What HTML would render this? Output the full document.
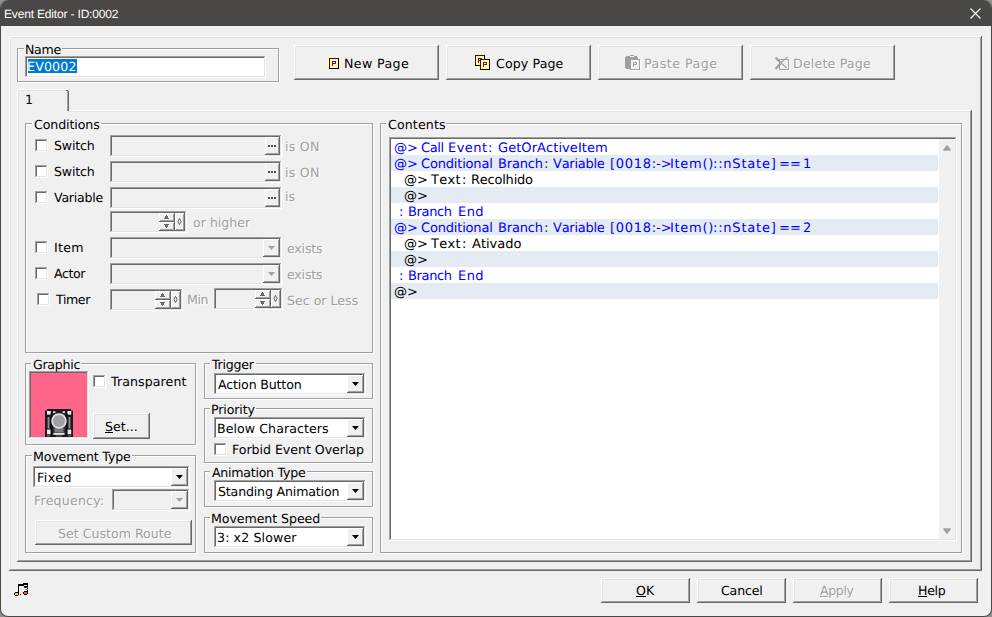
<!DOCTYPE html>
<html><head><meta charset="utf-8"><title>Event Editor - ID:0002</title>
<style>
html,body{margin:0;padding:0;}
body{width:992px;height:617px;overflow:hidden;background:#8f8f8f;position:relative;font:13px/16px "DejaVu Sans","Liberation Sans",sans-serif;}
#win{position:absolute;left:0;top:0;width:992px;height:617px;box-sizing:border-box;background:#f0f0f0;border:1px solid #4a4846;border-top:none;border-radius:8px;overflow:hidden;}
#win *{position:absolute;box-sizing:border-box;}
#tb{left:-1px;top:0;width:992px;height:26px;background:#4a4846;}
.t{white-space:pre;text-rendering:geometricPrecision;font:12.6px/16px "DejaVu Sans","Liberation Sans",sans-serif;height:16px;}
.t u{position:static !important;text-decoration:underline;text-underline-offset:1px;}
.tt{font:12px/16px "Liberation Sans",sans-serif;}
.lc{background:#f0f0f0;}
.lr{left:0;top:0;width:0;height:0;}
.ds{text-shadow:1px 1px 0 #fff;}
.li{font-size:13px;font-kerning:none;}
.gb{border:1px solid #a0a0a0;box-shadow:inset 1px 1px 0 #fff,1px 1px 0 #fff;}
.btn{background:#f0f0f0;box-shadow:inset -1px -1px 0 #696969,inset 1px 1px 0 #fff,inset -2px -2px 0 #a0a0a0,inset 2px 2px 0 #e3e3e3;}
.sk{background:#f0f0f0;box-shadow:inset -1px -1px 0 #fff,inset 1px 1px 0 #a0a0a0,inset -2px -2px 0 #e3e3e3,inset 2px 2px 0 #696969;}
.w{background:#fff;}
.cb{width:13px;height:13px;background:#fff;box-shadow:inset -1px -1px 0 #fff,inset 1px 1px 0 #a0a0a0,inset -2px -2px 0 #e3e3e3,inset 2px 2px 0 #696969;}
.ib{background:#f0f0f0;box-shadow:inset -1px -1px 0 #696969,inset 1px 1px 0 #fff,inset -2px -2px 0 #a0a0a0;}
.row{left:391px;width:547px;height:16px;background:#e4ebf3;}
svg{overflow:visible;}
</style></head><body>
<div id="win">
<div id="x0" style="left:-1px;top:0;width:992px;height:617px;">
<div id="tb"></div>
<svg style="left:970px;top:8px" width="11" height="11" viewBox="0 0 11 11"><path d="M0.5 0.5L10.5 10.5M10.5 0.5L0.5 10.5" stroke="#fff" stroke-width="1.1" fill="none"/></svg>

<!-- outer raised frame -->
<div style="left:9px;top:36px;width:973px;height:535px;box-shadow:inset -1px -1px 0 #696969,inset 1px 1px 0 #fff,inset -2px -2px 0 #a0a0a0,inset 2px 2px 0 #e3e3e3;"></div>

<!-- name group -->
<div class="gb" style="left:17px;top:48px;width:262px;height:34px;"></div>
<div class="sk w" style="left:25px;top:56px;width:241px;height:22px;"></div>
<div style="left:28px;top:59px;width:49px;height:14px;background:#0078d7;"></div>

<!-- top buttons -->
<div class="btn" style="left:294px;top:45px;width:145px;height:35px;"></div>
<div class="btn" style="left:446px;top:45px;width:145px;height:35px;"></div>
<div class="btn" style="left:598px;top:45px;width:145px;height:35px;"></div>
<div class="btn" style="left:750px;top:45px;width:145px;height:35px;"></div>
<svg style="left:0;top:0" width="992" height="100" viewBox="0 0 992 100" shape-rendering="crispEdges"><rect x="329" y="58" width="10" height="11" fill="#000"/><rect x="329" y="58" width="9" height="10" fill="#4a0a14"/><rect x="330" y="59" width="8" height="9" fill="#ffff99"/><rect x="332" y="61" width="1" height="5" fill="#800080"/><rect x="333" y="61" width="3" height="1" fill="#800080"/><rect x="335" y="62" width="1" height="1" fill="#800080"/><rect x="333" y="63" width="3" height="1" fill="#800080"/><rect x="326" y="56" width="1" height="1" fill="#ffff80"/><rect x="327" y="57" width="1" height="1" fill="#ffff80"/><rect x="328" y="58" width="1" height="1" fill="#ffff80"/><rect x="331" y="56" width="1" height="1" fill="#ffff80"/><rect x="331" y="57" width="1" height="1" fill="#ffff80"/><rect x="325" y="62" width="1" height="1" fill="#ffff80"/><rect x="326" y="62" width="1" height="1" fill="#ffff80"/><rect x="327" y="62" width="1" height="1" fill="#ffff80"/><rect x="328" y="62" width="1" height="1" fill="#ffff80"/><rect x="325" y="67" width="1" height="1" fill="#ffff80"/><rect x="326" y="66" width="1" height="1" fill="#ffff80"/><rect x="327" y="65" width="1" height="1" fill="#ffff80"/><rect x="328" y="64" width="1" height="1" fill="#ffff80"/><rect x="475" y="55" width="10" height="11" fill="#000"/><rect x="475" y="55" width="9" height="10" fill="#4a0a14"/><rect x="476" y="56" width="8" height="9" fill="#ffff99"/><rect x="478" y="58" width="1" height="5" fill="#800080"/><rect x="479" y="58" width="3" height="1" fill="#800080"/><rect x="481" y="59" width="1" height="1" fill="#800080"/><rect x="479" y="60" width="3" height="1" fill="#800080"/><rect x="480" y="59" width="10" height="11" fill="#000"/><rect x="480" y="59" width="9" height="10" fill="#4a0a14"/><rect x="481" y="60" width="8" height="9" fill="#ffff99"/><rect x="483" y="62" width="1" height="5" fill="#800080"/><rect x="484" y="62" width="3" height="1" fill="#800080"/><rect x="486" y="63" width="1" height="1" fill="#800080"/><rect x="484" y="64" width="3" height="1" fill="#800080"/><rect x="626" y="57" width="13" height="12" fill="#fff"/><rect x="625" y="57" width="13" height="11" fill="#a0a0a0"/><rect x="626" y="56" width="11" height="13" fill="#a0a0a0"/><rect x="630" y="55" width="4" height="1" fill="#a0a0a0"/><rect x="630" y="56" width="4" height="1" fill="#f4f4f4"/><rect x="631" y="60" width="10" height="11" fill="#fff"/><rect x="630" y="59" width="10" height="11" fill="#a0a0a0"/><rect x="631" y="60" width="8" height="9" fill="#f4f4f4"/><rect x="633" y="62" width="1" height="5" fill="#a0a0a0"/><rect x="634" y="62" width="3" height="1" fill="#a0a0a0"/><rect x="636" y="63" width="1" height="1" fill="#a0a0a0"/><rect x="634" y="64" width="3" height="1" fill="#a0a0a0"/><rect x="780" y="60" width="10" height="11" fill="#fff"/><rect x="779" y="59" width="10" height="11" fill="#a0a0a0"/><rect x="780" y="60" width="8" height="9" fill="#f4f4f4"/></svg>
<svg style="left:774px;top:56px" width="16" height="15" viewBox="0 0 16 15"><path d="M1.5 1.5L6.5 6.5M1.5 13L6.5 7.5" stroke="#a0a0a0" stroke-width="2.2" fill="none"/><path d="M6.5 6.5L12.5 12M6.5 7L13.5 0.8" stroke="#a0a0a0" stroke-width="1.1" fill="none"/></svg>
<svg style="left:0;top:570px" width="60" height="40" viewBox="0 570 60 40" shape-rendering="crispEdges"><rect x="23" y="583" width="5" height="2" fill="#000"/><rect x="18" y="584" width="6" height="2" fill="#000"/><rect x="18" y="584" width="1" height="9" fill="#000"/><rect x="27" y="583" width="1" height="10" fill="#000"/><rect x="24" y="586" width="4" height="1" fill="#000"/><rect x="24" y="587" width="4" height="1" fill="#3a3a3a"/><rect x="25" y="589" width="3" height="1" fill="#8a8a8a"/><rect x="14" y="593" width="5" height="2" fill="#000"/><rect x="15" y="592" width="3" height="4" fill="#000"/><rect x="15" y="593" width="3" height="2" fill="#ffe000"/><rect x="23" y="592" width="5" height="2" fill="#000"/><rect x="24" y="591" width="3" height="4" fill="#000"/><rect x="24" y="592" width="3" height="2" fill="#ff5020"/><rect x="20" y="594" width="1" height="1" fill="#000"/></svg>

<!-- tab page -->
<div style="left:17px;top:110px;width:955px;height:452px;box-shadow:inset -1px -1px 0 #696969,inset 1px 1px 0 #fff,inset -2px -2px 0 #a0a0a0,inset 2px 2px 0 #e3e3e3;"></div>
<!-- tab -->
<div style="left:17px;top:89px;width:52px;height:23px;background:#f0f0f0;"></div>
<div style="left:17px;top:91px;width:1px;height:21px;background:#fff;"></div>
<div style="left:18px;top:90px;width:1px;height:1px;background:#fff;"></div>
<div style="left:19px;top:89px;width:47px;height:1px;background:#fff;"></div>
<div style="left:18px;top:91px;width:1px;height:21px;background:#e3e3e3;"></div>
<div style="left:19px;top:90px;width:47px;height:1px;background:#e3e3e3;"></div>
<div style="left:67px;top:91px;width:1px;height:20px;background:#a0a0a0;"></div>
<div style="left:68px;top:91px;width:1px;height:20px;background:#696969;"></div>
<div style="left:66px;top:90px;width:2px;height:1px;background:#696969;"></div>

<!-- Conditions -->
<div class="gb" style="left:25px;top:123px;width:348px;height:230px;"></div>
<div class="cb" style="left:35px;top:139px"></div>
<div class="cb" style="left:35px;top:165px"></div>
<div class="cb" style="left:35px;top:191px"></div>
<div class="cb" style="left:35px;top:241px"></div>
<div class="cb" style="left:35px;top:267px"></div>
<div class="cb" style="left:37px;top:293px"></div>
<div class="sk" style="left:110px;top:135px;width:172px;height:22px;"></div>
<div class="ib" style="left:265px;top:137px;width:15px;height:18px;"></div>
<div style="left:268px;top:145px;width:2px;height:2px;background:#4d4d4d;"></div>
<div style="left:271px;top:145px;width:2px;height:2px;background:#4d4d4d;"></div>
<div style="left:274px;top:145px;width:2px;height:2px;background:#4d4d4d;"></div>
<div class="sk" style="left:110px;top:161px;width:172px;height:22px;"></div>
<div class="ib" style="left:265px;top:163px;width:15px;height:18px;"></div>
<div style="left:268px;top:171px;width:2px;height:2px;background:#4d4d4d;"></div>
<div style="left:271px;top:171px;width:2px;height:2px;background:#4d4d4d;"></div>
<div style="left:274px;top:171px;width:2px;height:2px;background:#4d4d4d;"></div>
<div class="sk" style="left:110px;top:187px;width:172px;height:22px;"></div>
<div class="ib" style="left:265px;top:189px;width:15px;height:18px;"></div>
<div style="left:268px;top:197px;width:2px;height:2px;background:#4d4d4d;"></div>
<div style="left:271px;top:197px;width:2px;height:2px;background:#4d4d4d;"></div>
<div style="left:274px;top:197px;width:2px;height:2px;background:#4d4d4d;"></div>
<div class="sk" style="left:110px;top:237px;width:172px;height:22px;"></div>
<div class="ib" style="left:263px;top:239px;width:17px;height:18px;"></div>
<svg style="left:268px;top:246px" width="7" height="4" viewBox="0 0 7 4"><path d="M0 0H7L3.5 4Z" fill="#a0a0a0"/></svg>
<div class="sk" style="left:110px;top:263px;width:172px;height:22px;"></div>
<div class="ib" style="left:263px;top:265px;width:17px;height:18px;"></div>
<svg style="left:268px;top:272px" width="7" height="4" viewBox="0 0 7 4"><path d="M0 0H7L3.5 4Z" fill="#a0a0a0"/></svg>
<div class="sk" style="left:110px;top:211px;width:77px;height:22px;"></div>
<div class="ib" style="left:175px;top:213px;width:10px;height:18px;"></div>
<svg style="left:177px;top:218px" width="5" height="7" viewBox="0 0 5 7"><path d="M2.5 0.4L4.1 3.5L2.5 6.6L0.9 3.5Z" fill="none" stroke="#5a5a5a" stroke-width="0.95"/></svg>
<div class="ib" style="left:159px;top:213px;width:16px;height:9px;"></div>
<div class="ib" style="left:159px;top:222px;width:16px;height:9px;"></div>
<svg style="left:164px;top:215px" width="5" height="4" viewBox="0 0 5 4"><path d="M2 0H3V1H4V3H5V4H0V3H1V1H2Z" fill="#696969"/></svg>
<svg style="left:164px;top:224px" width="5" height="4" viewBox="0 0 5 4"><path d="M0 0H5V1H4V3H3V4H2V3H1V1H0Z" fill="#696969"/></svg>
<div class="sk" style="left:110px;top:289px;width:73px;height:22px;"></div>
<div class="ib" style="left:171px;top:291px;width:10px;height:18px;"></div>
<svg style="left:173px;top:296px" width="5" height="7" viewBox="0 0 5 7"><path d="M2.5 0.4L4.1 3.5L2.5 6.6L0.9 3.5Z" fill="none" stroke="#5a5a5a" stroke-width="0.95"/></svg>
<div class="ib" style="left:155px;top:291px;width:16px;height:9px;"></div>
<div class="ib" style="left:155px;top:300px;width:16px;height:9px;"></div>
<svg style="left:160px;top:293px" width="5" height="4" viewBox="0 0 5 4"><path d="M2 0H3V1H4V3H5V4H0V3H1V1H2Z" fill="#696969"/></svg>
<svg style="left:160px;top:302px" width="5" height="4" viewBox="0 0 5 4"><path d="M0 0H5V1H4V3H3V4H2V3H1V1H0Z" fill="#696969"/></svg>
<div class="sk" style="left:214px;top:288px;width:69px;height:22px;"></div>
<div class="ib" style="left:271px;top:290px;width:10px;height:18px;"></div>
<svg style="left:273px;top:295px" width="5" height="7" viewBox="0 0 5 7"><path d="M2.5 0.4L4.1 3.5L2.5 6.6L0.9 3.5Z" fill="none" stroke="#5a5a5a" stroke-width="0.95"/></svg>
<div class="ib" style="left:255px;top:290px;width:16px;height:9px;"></div>
<div class="ib" style="left:255px;top:299px;width:16px;height:9px;"></div>
<svg style="left:260px;top:292px" width="5" height="4" viewBox="0 0 5 4"><path d="M2 0H3V1H4V3H5V4H0V3H1V1H2Z" fill="#696969"/></svg>
<svg style="left:260px;top:301px" width="5" height="4" viewBox="0 0 5 4"><path d="M0 0H5V1H4V3H3V4H2V3H1V1H0Z" fill="#696969"/></svg>

<!-- Graphic -->
<div class="gb" style="left:25px;top:363px;width:171px;height:82px;"></div>
<div class="sk" style="left:29px;top:371px;width:60px;height:68px;background:#ff6489;"></div>
<svg style="left:45px;top:409px" width="28" height="28" viewBox="0 0 28 28"><path d="M2 0H26V1.5H28V28H0V1.5H2Z" fill="#1b1b1d"/><rect x="7.5" y="4" width="13" height="22" fill="#333337"/><rect x="2" y="2" width="3.8" height="3.6" fill="#ececee"/><rect x="22.4" y="2" width="3.8" height="3.6" fill="#ececee"/><rect x="2" y="20.6" width="3.8" height="4.6" fill="#ececee"/><rect x="22.4" y="20.6" width="3.8" height="4.6" fill="#ececee"/><rect x="8" y="2.2" width="2.4" height="1.8" fill="#d0d0d4"/><rect x="17.6" y="2.2" width="2.4" height="1.8" fill="#d0d0d4"/><rect x="2.6" y="8" width="1.9" height="11.5" fill="#8d8d91"/><rect x="23.5" y="8" width="1.9" height="11.5" fill="#8d8d91"/><rect x="5.7" y="4" width="1.6" height="22" fill="#0c0c0e"/><rect x="20.7" y="4" width="1.6" height="22" fill="#0c0c0e"/><rect x="9.5" y="19" width="9" height="4.6" fill="#7b7b7f"/><rect x="8.5" y="24" width="11" height="1.8" fill="#ececee"/><circle cx="14" cy="12" r="7.8" fill="#dcdce0"/><circle cx="14" cy="12" r="6" fill="#a29fa3"/><rect x="2" y="26.2" width="3" height="1.3" fill="#6a6a6e"/><rect x="23" y="26.2" width="3" height="1.3" fill="#6a6a6e"/><rect x="11" y="26.4" width="6" height="1.1" fill="#6a6a6e"/></svg>
<div class="cb" style="left:93px;top:375px"></div>
<div class="btn" style="left:93px;top:413px;width:57px;height:26px;"></div>

<!-- Movement type -->
<div class="gb" style="left:25px;top:455px;width:171px;height:98px;"></div>
<div class="btn" style="left:35px;top:520px;width:157px;height:25px;"></div>

<!-- Trigger etc -->
<div class="gb" style="left:204px;top:363px;width:169px;height:36px;"></div>
<div class="gb" style="left:204px;top:408px;width:169px;height:55px;"></div>
<div class="cb" style="left:214px;top:443px"></div>
<div class="gb" style="left:204px;top:471px;width:169px;height:36px;"></div>
<div class="gb" style="left:204px;top:517px;width:169px;height:36px;"></div>
<div class="sk w" style="left:214px;top:373px;width:152px;height:22px;"></div>
<div class="ib" style="left:347px;top:375px;width:17px;height:18px;"></div>
<svg style="left:352px;top:382px" width="7" height="4" viewBox="0 0 7 4"><path d="M0 0H7L3.5 4Z" fill="#000"/></svg>
<div class="sk w" style="left:214px;top:417px;width:152px;height:22px;"></div>
<div class="ib" style="left:347px;top:419px;width:17px;height:18px;"></div>
<svg style="left:352px;top:426px" width="7" height="4" viewBox="0 0 7 4"><path d="M0 0H7L3.5 4Z" fill="#000"/></svg>
<div class="sk w" style="left:214px;top:480px;width:152px;height:22px;"></div>
<div class="ib" style="left:347px;top:482px;width:17px;height:18px;"></div>
<svg style="left:352px;top:489px" width="7" height="4" viewBox="0 0 7 4"><path d="M0 0H7L3.5 4Z" fill="#000"/></svg>
<div class="sk w" style="left:214px;top:526px;width:152px;height:22px;"></div>
<div class="ib" style="left:347px;top:528px;width:17px;height:18px;"></div>
<svg style="left:352px;top:535px" width="7" height="4" viewBox="0 0 7 4"><path d="M0 0H7L3.5 4Z" fill="#000"/></svg>
<div class="sk w" style="left:33px;top:466px;width:157px;height:22px;"></div>
<div class="ib" style="left:171px;top:468px;width:17px;height:18px;"></div>
<svg style="left:176px;top:475px" width="7" height="4" viewBox="0 0 7 4"><path d="M0 0H7L3.5 4Z" fill="#000"/></svg>
<div class="sk" style="left:112px;top:489px;width:78px;height:22px;"></div>
<div class="ib" style="left:171px;top:491px;width:17px;height:18px;"></div>
<svg style="left:176px;top:498px" width="7" height="4" viewBox="0 0 7 4"><path d="M0 0H7L3.5 4Z" fill="#a0a0a0"/></svg>

<!-- Contents -->
<div class="gb" style="left:380px;top:123px;width:582px;height:430px;"></div>
<div class="sk w" style="left:389px;top:137px;width:568px;height:404px;"></div>
<div style="left:939px;top:139px;width:16px;height:400px;background:#f0f0f0;"></div>
<div class="row" style="top:155px"></div>
<div class="row" style="top:187px"></div>
<div class="row" style="top:219px"></div>
<div class="row" style="top:251px"></div>
<div class="row" style="top:283px"></div>
<svg style="left:943px;top:145px" width="8" height="6" viewBox="0 0 8 6"><path d="M1 5L4 1L7 5Z" fill="#a0a0a0" stroke="#a0a0a0" stroke-width="1.7" stroke-linejoin="round"/></svg>
<svg style="left:943px;top:528px" width="8" height="6" viewBox="0 0 8 6"><path d="M1 1L4 5L7 1Z" fill="#a0a0a0" stroke="#a0a0a0" stroke-width="1.7" stroke-linejoin="round"/></svg>

<!-- bottom buttons -->
<div class="btn" style="left:601px;top:578px;width:89px;height:25px;"></div>
<div class="btn" style="left:697px;top:578px;width:89px;height:25px;"></div>
<div class="btn" style="left:793px;top:578px;width:89px;height:25px;"></div>
<div class="btn" style="left:889px;top:578px;width:89px;height:25px;"></div>

<span class="t tt" style="left:4.00px;top:6.00px;color:#fff;letter-spacing:-0.171px;">Event Editor - ID:0002</span>
<div class="lc" style="left:24px;top:47px;width:38px;height:4px;"></div><span class="t" style="left:25.00px;top:42.00px;color:#000;letter-spacing:-0.300px;">Name</span>
<span class="t" style="left:27.00px;top:59.00px;color:#fff;letter-spacing:0.180px;">EV0002</span>
<span class="t" style="left:25.00px;top:92.00px;color:#000;letter-spacing:0.000px;">1</span>
<div class="lc" style="left:32px;top:122px;width:69px;height:4px;"></div><span class="t" style="left:34.00px;top:117.00px;color:#000;letter-spacing:-0.100px;">Conditions</span>
<span class="t" style="left:54.00px;top:138.00px;color:#000;letter-spacing:-0.180px;">Switch</span>
<span class="t" style="left:54.00px;top:164.00px;color:#000;letter-spacing:-0.180px;">Switch</span>
<span class="t" style="left:54.00px;top:190.00px;color:#000;letter-spacing:-0.257px;">Variable</span>
<span class="t" style="left:54.00px;top:240.00px;color:#000;letter-spacing:0.300px;">Item</span>
<span class="t" style="left:54.00px;top:266.00px;color:#000;letter-spacing:-0.400px;">Actor</span>
<span class="t" style="left:56.00px;top:292.00px;color:#000;letter-spacing:-0.400px;">Timer</span>
<span class="t ds" style="left:285.00px;top:139.00px;color:#a0a0a0;letter-spacing:0.225px;">is ON</span>
<span class="t ds" style="left:285.00px;top:165.00px;color:#a0a0a0;letter-spacing:0.225px;">is ON</span>
<span class="t ds" style="left:285.00px;top:189.00px;color:#a0a0a0;letter-spacing:0.000px;">is</span>
<span class="t ds" style="left:193.00px;top:215.00px;color:#a0a0a0;letter-spacing:-0.000px;">or higher</span>
<span class="t ds" style="left:287.00px;top:241.00px;color:#a0a0a0;letter-spacing:-0.180px;">exists</span>
<span class="t ds" style="left:287.00px;top:267.00px;color:#a0a0a0;letter-spacing:-0.180px;">exists</span>
<span class="t ds" style="left:187.00px;top:292.00px;color:#a0a0a0;letter-spacing:-0.400px;">Min</span>
<span class="t ds" style="left:287.00px;top:293.00px;color:#a0a0a0;letter-spacing:0.000px;">Sec or Less</span>
<div class="lc" style="left:31px;top:362px;width:50px;height:4px;"></div><span class="t" style="left:33.00px;top:357.00px;color:#000;letter-spacing:-0.288px;">Graphic</span>
<span class="t" style="left:111.00px;top:374.00px;color:#000;letter-spacing:0.090px;">Transparent</span>
<span class="t" style="left:105.00px;top:419.00px;color:#000;letter-spacing:0.000px;"><u>S</u>et...</span>
<div class="lc" style="left:32px;top:454px;width:100px;height:4px;"></div><span class="t" style="left:33.00px;top:449.00px;color:#000;letter-spacing:-0.150px;">Movement Type</span>
<span class="t" style="left:37.00px;top:470.00px;color:#000;letter-spacing:0.450px;">Fixed</span>
<span class="t ds" style="left:34.00px;top:493.00px;color:#a0a0a0;letter-spacing:0.200px;">Frequency:</span>
<span class="t ds" style="left:58.00px;top:526.00px;color:#a0a0a0;letter-spacing:-0.000px;">Set Custom Route</span>
<div class="lc" style="left:210px;top:362px;width:46px;height:4px;"></div><span class="t" style="left:212.00px;top:357.00px;color:#000;letter-spacing:-0.240px;">Trigger</span>
<span class="t" style="left:218.00px;top:377.00px;color:#000;letter-spacing:-0.165px;">Action Button</span>
<div class="lc" style="left:210px;top:407px;width:46px;height:4px;"></div><span class="t" style="left:211.00px;top:402.00px;color:#000;letter-spacing:-0.129px;">Priority</span>
<span class="t" style="left:217.00px;top:421.00px;color:#000;letter-spacing:0.060px;">Below Characters</span>
<span class="t" style="left:232.00px;top:442.00px;color:#000;letter-spacing:-0.038px;">Forbid Event Overlap</span>
<div class="lc" style="left:210px;top:470px;width:97px;height:4px;"></div><span class="t" style="left:212.00px;top:465.00px;color:#000;letter-spacing:-0.263px;">Animation Type</span>
<span class="t" style="left:218.00px;top:484.00px;color:#000;letter-spacing:-0.169px;">Standing Animation</span>
<div class="lc" style="left:210px;top:516px;width:111px;height:4px;"></div><span class="t" style="left:211.00px;top:511.00px;color:#000;letter-spacing:-0.069px;">Movement Speed</span>
<span class="t" style="left:217.00px;top:530.00px;color:#000;letter-spacing:0.115px;">3: x2 Slower</span>
<div class="lc" style="left:386px;top:122px;width:60px;height:4px;"></div><span class="t" style="left:388.00px;top:117.00px;color:#000;letter-spacing:0.129px;">Contents</span>
<span class="t" style="left:344.00px;top:56.00px;color:#000;letter-spacing:0.386px;">New Page</span>
<span class="t" style="left:496.00px;top:56.00px;color:#000;letter-spacing:0.113px;">Copy Page</span>
<span class="t ds" style="left:644.00px;top:56.00px;color:#a0a0a0;letter-spacing:0.500px;">Paste Page</span>
<span class="t ds" style="left:793.00px;top:56.00px;color:#a0a0a0;letter-spacing:0.180px;">Delete Page</span>
<span class="t" style="left:636.00px;top:583.00px;color:#000;letter-spacing:0.000px;"><u>O</u>K</span>
<span class="t" style="left:721.00px;top:583.00px;color:#000;letter-spacing:-0.180px;">Cancel</span>
<span class="t ds" style="left:820.00px;top:583.00px;color:#a0a0a0;letter-spacing:-0.400px;"><u>A</u>pply</span>
<span class="t" style="left:918.00px;top:583.00px;color:#000;letter-spacing:-0.300px;"><u>H</u>elp</span>
<div class="lr"><span class="t li" style="left:394.00px;top:141.00px;color:#0000ff;letter-spacing:0.000px;">@&gt; </span><span class="t li" style="left:421.00px;top:141.00px;color:#0000ff;letter-spacing:-0.400px;">Call </span><span class="t li" style="left:448.00px;top:141.00px;color:#0000ff;letter-spacing:0.450px;">Event</span><span class="t li" style="left:488.00px;top:141.00px;color:#0000ff;letter-spacing:0.000px;">: </span><span class="t li" style="left:498.00px;top:141.00px;color:#0000ff;letter-spacing:0.064px;">GetOrActiveItem</span></div>
<div class="lr"><span class="t li" style="left:394.00px;top:157.00px;color:#0000ff;letter-spacing:0.000px;">@&gt; </span><span class="t li" style="left:421.00px;top:157.00px;color:#0000ff;letter-spacing:-0.180px;">Conditional </span><span class="t li" style="left:498.00px;top:157.00px;color:#0000ff;letter-spacing:-0.180px;">Branch</span><span class="t li" style="left:544.00px;top:157.00px;color:#0000ff;letter-spacing:0.000px;">: </span><span class="t li" style="left:553.00px;top:157.00px;color:#0000ff;letter-spacing:-0.257px;">Variable </span><span class="t li" style="left:610.00px;top:157.00px;color:#0000ff;letter-spacing:0.720px;">[0018:</span><span class="t li" style="left:656.00px;top:157.00px;color:#0000ff;letter-spacing:0.000px;">-&gt;</span><span class="t li" style="left:670.00px;top:157.00px;color:#0000ff;letter-spacing:0.720px;">Item()</span><span class="t li" style="left:713.00px;top:157.00px;color:#0000ff;letter-spacing:0.787px;">::nState] </span><span class="t li" style="left:779.00px;top:157.00px;color:#0000ff;letter-spacing:0.000px;">== </span><span class="t li" style="left:803.00px;top:157.00px;color:#0000ff;letter-spacing:0.000px;">1</span></div>
<div class="lr"><span class="t li" style="left:404.00px;top:173.00px;color:#000;letter-spacing:0.000px;">@&gt; </span><span class="t li" style="left:431.00px;top:173.00px;color:#000;letter-spacing:0.300px;">Text</span><span class="t li" style="left:462.00px;top:173.00px;color:#000;letter-spacing:0.000px;">: </span><span class="t li" style="left:471.00px;top:173.00px;color:#000;letter-spacing:-0.225px;">Recolhido</span></div>
<div class="lr"><span class="t li" style="left:404.00px;top:189.00px;color:#000;letter-spacing:0.000px;">@&gt;</span></div>
<div class="lr"><span class="t li" style="left:399.00px;top:205.00px;color:#0000ff;letter-spacing:0.000px;">: </span><span class="t li" style="left:408.00px;top:205.00px;color:#0000ff;letter-spacing:-0.360px;">Branch </span><span class="t li" style="left:458.00px;top:205.00px;color:#0000ff;letter-spacing:0.450px;">End</span></div>
<div class="lr"><span class="t li" style="left:394.00px;top:221.00px;color:#0000ff;letter-spacing:0.000px;">@&gt; </span><span class="t li" style="left:421.00px;top:221.00px;color:#0000ff;letter-spacing:-0.180px;">Conditional </span><span class="t li" style="left:498.00px;top:221.00px;color:#0000ff;letter-spacing:-0.180px;">Branch</span><span class="t li" style="left:544.00px;top:221.00px;color:#0000ff;letter-spacing:0.000px;">: </span><span class="t li" style="left:553.00px;top:221.00px;color:#0000ff;letter-spacing:-0.257px;">Variable </span><span class="t li" style="left:610.00px;top:221.00px;color:#0000ff;letter-spacing:0.720px;">[0018:</span><span class="t li" style="left:656.00px;top:221.00px;color:#0000ff;letter-spacing:0.000px;">-&gt;</span><span class="t li" style="left:670.00px;top:221.00px;color:#0000ff;letter-spacing:0.720px;">Item()</span><span class="t li" style="left:713.00px;top:221.00px;color:#0000ff;letter-spacing:0.787px;">::nState] </span><span class="t li" style="left:779.00px;top:221.00px;color:#0000ff;letter-spacing:0.000px;">== </span><span class="t li" style="left:803.00px;top:221.00px;color:#0000ff;letter-spacing:0.000px;">2</span></div>
<div class="lr"><span class="t li" style="left:404.00px;top:237.00px;color:#000;letter-spacing:0.000px;">@&gt; </span><span class="t li" style="left:431.00px;top:237.00px;color:#000;letter-spacing:0.300px;">Text</span><span class="t li" style="left:462.00px;top:237.00px;color:#000;letter-spacing:0.000px;">: </span><span class="t li" style="left:472.00px;top:237.00px;color:#000;letter-spacing:0.000px;">Ativado</span></div>
<div class="lr"><span class="t li" style="left:404.00px;top:253.00px;color:#000;letter-spacing:0.000px;">@&gt;</span></div>
<div class="lr"><span class="t li" style="left:399.00px;top:269.00px;color:#0000ff;letter-spacing:0.000px;">: </span><span class="t li" style="left:408.00px;top:269.00px;color:#0000ff;letter-spacing:-0.360px;">Branch </span><span class="t li" style="left:458.00px;top:269.00px;color:#0000ff;letter-spacing:0.450px;">End</span></div>
<div class="lr"><span class="t li" style="left:394.00px;top:285.00px;color:#000;letter-spacing:0.000px;">@&gt;</span></div>
</div>
</div>
</body></html>
